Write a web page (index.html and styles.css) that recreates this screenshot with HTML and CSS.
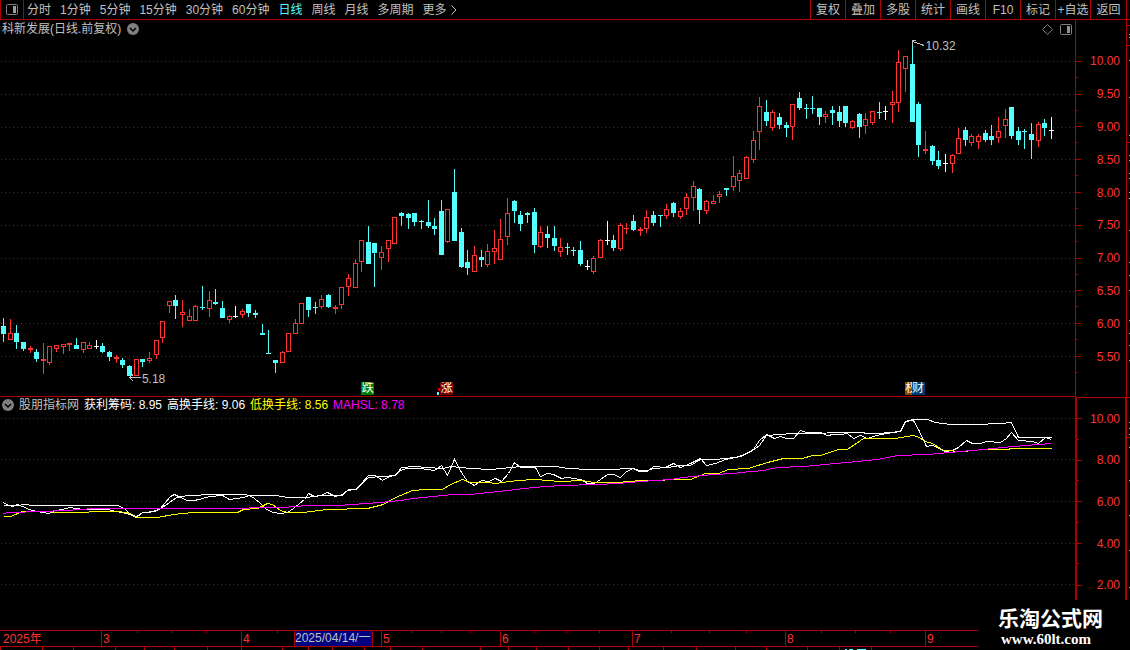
FILE: index.html
```html
<!DOCTYPE html>
<html lang="zh-CN">
<head>
  <meta charset="UTF-8" />
  <title>科新发展 日线</title>
  <link rel="stylesheet" href="styles.css">
</head>
<body>

<header class="toolbar">
  <button class="layout-btn" aria-label="布局">
    <svg width="12" height="12" viewBox="0 0 12 12">
      <rect x="0.5" y="0.5" width="11" height="10" rx="1" fill="none" stroke="#808080"/>
      <rect x="7" y="2" width="3" height="7" fill="#a0a0a0"/>
    </svg>
  </button>
  <nav class="periods">
    <button>分时</button>
    <button>1分钟</button>
    <button>5分钟</button>
    <button>15分钟</button>
    <button>30分钟</button>
    <button>60分钟</button>
    <button class="active">日线</button>
    <button>周线</button>
    <button>月线</button>
    <button>多周期</button>
    <button>更多<svg class="more" width="6" height="10" viewBox="0 0 6 10"><path d="M0.5 0.5 L5 5 L0.5 9.5" fill="none" stroke="#c0c0c0"/></svg></button>
  </nav>
  <nav class="tools">
    <button>复权</button>
    <button>叠加</button>
    <button>多股</button>
    <button>统计</button>
    <button>画线</button>
    <button>F10</button>
    <button>标记</button>
    <button>+自选</button>
    <button>返回</button>
  </nav>
</header>

<main class="board">
  <section class="chart price">
    <svg id="price" class="plot" viewBox="0 20 1075 376" preserveAspectRatio="none"></svg>
    <h1 class="title">科新发展(日线.前复权)
      <svg width="12" height="12" viewBox="0 0 12 12"><circle cx="6" cy="6" r="6" fill="#808080"/><path d="M3 5 L6 8 L9 5" fill="none" stroke="#000" stroke-width="1.5"/></svg>
    </h1>
    <div class="corner">
      <svg width="11" height="11" viewBox="0 0 11 11"><path d="M5.5 0.5 L10.5 5.5 L5.5 10.5 L0.5 5.5 Z" fill="none" stroke="#808080"/></svg>
      <svg width="12" height="11" viewBox="0 0 12 11"><rect x="0.5" y="0.5" width="11" height="10" rx="1" fill="none" stroke="#808080"/><rect x="7" y="2" width="3" height="7" fill="#909090"/></svg>
    </div>
    <span class="extreme high">10.32</span>
    <span class="extreme low">5.18</span>
    <span class="flag fall">跌</span>
    <span class="flag rise">涨</span>
    <span class="flag half">权</span>
    <span class="flag fin">财</span>
  </section>
  <ol class="scale price-scale">
    <li>10.00</li><li>9.50</li><li>9.00</li><li>8.50</li><li>8.00</li>
    <li>7.50</li><li>7.00</li><li>6.50</li><li>6.00</li><li>5.50</li>
  </ol>

  <section class="chart indicator">
    <svg id="indicator" class="plot" viewBox="0 397 1075 233" preserveAspectRatio="none"></svg>
    <div class="legend">
      <svg width="12" height="12" viewBox="0 0 12 12"><circle cx="6" cy="6" r="6" fill="#808080"/><path d="M3 5 L6 8 L9 5" fill="none" stroke="#000" stroke-width="1.5"/></svg>
      <span>股朋指标网</span>
      <span class="white">获利筹码: 8.95</span>
      <span class="white">高换手线: 9.06</span>
      <span class="yellow">低换手线: 8.56</span>
      <span class="magenta">MAHSL: 8.78</span>
    </div>
  </section>
  <ol class="scale ind-scale">
    <li>10.00</li><li>8.00</li><li>6.00</li><li>4.00</li><li>2.00</li>
  </ol>
  <svg id="edge" class="edge" width="3" height="610" viewBox="0 20 3 610"></svg>
</main>

<footer>
  <div class="dates">
    <ol class="months">
      <li>2025年</li><li>3</li><li>4</li><li>5</li><li>6</li><li>7</li><li>8</li><li>9</li>
    </ol>
    <span class="cursor-date">2025/04/14/一</span>
  </div>
  <div id="tabs" class="tabs"></div>
</footer>

<div class="watermark">
  <strong>乐淘公式网</strong>
  <span>www.60lt.com</span>
</div>

<script src="chart.js"></script>
</body>
</html>
```
FILE: styles.css
```css
* {
  box-sizing: border-box;
}
body {
  margin: 0;
  position: relative;
  background: #000;
  color: #c0c0c0;
  font: 12px/16px "Liberation Sans", "Noto Sans CJK SC", sans-serif;
  overflow: hidden;
}
button {
  margin: 0;
  padding: 0;
  border: 0;
  background: none;
  color: inherit;
  font: inherit;
  white-space: nowrap;
}
ol {
  margin: 0;
  padding: 0;
  list-style: none;
}

/* top bar */
.toolbar {
  display: flex;
  height: 20px;
  padding-right: 3px;
  border-bottom: 1px solid #b00000;
}
.layout-btn {
  width: 24px;
  border: 1px solid #b00000;
  border-width: 0 1px;
  display: flex;
  align-items: center;
  justify-content: center;
}
.periods {
  flex: 1;
  display: flex;
  gap: 9px;
  padding-left: 3px;
}
.periods .active {
  color: #54ffff;
}
.more {
  margin-left: 4px;
  vertical-align: -1px;
}
.tools {
  width: 317px;
  display: grid;
  grid-template-columns: repeat(8, 35px) 1fr;
  border-right: 1px solid #b00000;
}
.tools button {
  border-left: 1px solid #b00000;
}

/* charts */
.board {
  position: relative;
  display: grid;
  grid-template-columns: 1fr 52px;
  padding-right: 3px;
}
.chart {
  position: relative;
}
.price {
  height: 377px;
  border-bottom: 1px solid #b00000;
}
.indicator {
  height: 233px;
}
.plot {
  display: block;
  width: 100%;
  height: 100%;
  shape-rendering: crispEdges;
}
.title {
  position: absolute;
  top: 1px;
  left: 2px;
  margin: 0;
  font: inherit;
  display: flex;
  align-items: center;
  gap: 6px;
}
.corner {
  position: absolute;
  top: 4px;
  right: 3px;
  display: flex;
  gap: 7px;
}
.extreme {
  position: absolute;
}
.high {
  top: 18px;
  left: 86.1%;
}
.low {
  top: 351px;
  left: 13.2%;
}
.flag {
  position: absolute;
  bottom: 1px;
  width: 13px;
  height: 13px;
  line-height: 13px;
  text-align: center;
  color: #fff;
  overflow: hidden;
}
.fall {
  left: 33.6%;
  background: #008000;
}
.rise {
  left: 40.95%;
  background: #800000;
}
.half {
  left: 84.2%;
  width: 7px;
  text-align: left;
  background: #904800;
}
.fin {
  left: 84.8%;
  background: #003c70;
}
.legend {
  position: absolute;
  top: 0;
  left: 2px;
  display: flex;
  align-items: center;
  gap: 5px;
}
.white {
  color: #fff;
}
.yellow {
  color: #ff0;
}
.magenta {
  color: #f0f;
}

/* value scales */
.scale {
  display: grid;
  border: 0 solid #b00000;
  color: #ff3232;
}
.price-scale {
  border-width: 0 1px;
  padding: 25px 0 24px;
  grid-template-rows: repeat(10, 1fr);
}
.ind-scale {
  border-width: 1px 2px 0;
  padding-bottom: 24px;
  grid-template-rows: repeat(5, 1fr);
}
.scale li {
  display: flex;
  align-items: center;
  justify-content: space-between;
  padding-right: 6px;
  background: linear-gradient(#b00000, #b00000) left bottom / 2px 1px no-repeat;
}
.scale li::before {
  content: "";
  width: 5px;
  height: 1px;
  background: #b00000;
}
.ind-scale li {
  padding-right: 5px;
}
.edge {
  position: absolute;
  top: 0;
  right: 0;
}

/* date axis */
.dates {
  position: relative;
  border: 1px solid #b00000;
  border-width: 1px 0;
}
.months {
  display: grid;
  grid-template-columns: 101fr 140fr 140fr 119fr 132fr 153fr 140fr 205fr;
  color: #ff3232;
}
.months li {
  height: 15px;
  line-height: 16px;
  padding-left: 1px;
  border-left: 1px solid #b00000;
  background:
    linear-gradient(#b00000, #b00000) 25% 0 / 1px 2px no-repeat,
    linear-gradient(#b00000, #b00000) 50% 0 / 1px 2px no-repeat,
    linear-gradient(#b00000, #b00000) 75% 0 / 1px 2px no-repeat;
}
.months li:first-child {
  padding-left: 3px;
  border-left: 0;
}
.months li:first-child,
.months li:last-child {
  background: none;
}
.cursor-date {
  position: absolute;
  top: 0;
  left: 26.02%;
  width: 79px;
  height: 15px;
  line-height: 15px;
  border: 1px solid #b00000;
  border-width: 0 1px;
  background: #000080;
  overflow: hidden;
  white-space: nowrap;
}
.tabs {
  display: flex;
  height: 3px;
}
.tabs i {
  flex: none;
  border-left: 1px solid #b00000;
}
.tabs .lit {
  background: linear-gradient(90deg, transparent 5px, #54ffff 5px, #54ffff 7px, transparent 7px, transparent 9px, #54ffff 9px, #54ffff 13px, transparent 13px, transparent 17px, #54ffff 17px, #54ffff 26px, transparent 26px) 0 2px no-repeat;
}

.watermark {
  position: absolute;
  right: 0;
  bottom: 0;
  width: 152px;
  height: 50px;
  padding: 8px 0 0 20px;
  background: #000;
  color: #fff;
}
.watermark strong {
  display: block;
  font-size: 21px;
  line-height: 22px;
}
.watermark span {
  display: block;
  padding-left: 3px;
  font: bold 15px/18px "Liberation Serif", serif;
}
```
FILE: chart.js
```javascript
const NS = 'http://www.w3.org/2000/svg';
const RED = '#ff3232';
const CYAN = '#54ffff';

// one candle per entry: kind high bodyTop bodyBottom low
// r = up (hollow), c = down (filled), w = unchanged
const candles = `
c 318 326 334 342,r 319 333 340 340,c 325 333 342 349,c 342 342 349 351,r 346 348 350 353,c 349 352 359 362,
r 343 359 361 374,r 346 346 363 365,r 345 345 349 352,r 344 344 347 354,r 343 343 345 351,c 338 345 349 349,
r 342 342 350 353,r 342 345 349 349,w 340 346 347 349,c 343 346 352 353,c 351 352 357 361,r 355 357 359 363,
c 358 360 365 368,c 365 366 376 376,r 359 359 376 376,c 359 359 362 367,r 352 358 361 363,r 340 340 355 359,
r 321 321 338 343,r 301 301 306 313,c 295 300 306 319,r 300 312 315 327,r 309 316 321 321,r 305 306 321 321,
c 286 307 308 310,r 291 300 309 317,c 289 302 304 305,c 301 308 318 318,r 315 316 320 323,w 306 316 317 318,
r 309 311 315 318,c 304 304 313 317,c 310 313 315 318,c 324 333 335 335,c 330 353 354 354,c 360 360 363 373,
r 351 352 363 363,r 333 333 352 352,r 319 323 334 334,r 303 303 324 324,c 297 297 310 317,c 302 307 308 314,
r 295 299 307 309,c 294 295 307 308,r 305 307 309 314,r 287 287 305 309,r 274 278 287 296,r 259 263 288 288,
r 240 240 262 272,c 226 242 264 264,c 243 243 253 287,r 246 252 258 270,r 240 240 249 262,r 217 217 244 244,
c 212 213 216 226,c 213 214 218 229,c 213 213 222 226,c 220 221 222 229,c 200 222 226 228,c 218 226 229 235,
c 200 211 255 255,r 209 209 242 243,c 169 192 241 241,c 228 232 267 268,c 250 262 268 275,r 246 255 272 272,
c 250 257 260 267,r 244 251 265 267,r 230 248 252 264,r 219 239 260 260,r 198 213 237 245,c 200 201 211 223,
c 211 215 224 231,c 212 213 215 223,c 208 212 245 253,r 226 232 247 248,c 226 234 238 248,c 226 238 246 251,
r 238 247 252 257,c 243 247 248 255,c 247 250 251 256,c 241 250 264 266,w 260 266 267 270,r 256 258 272 274,
r 239 240 258 258,w 221 240 241 245,c 235 240 248 251,r 223 225 249 251,r 223 228 229 234,c 215 221 230 231,
r 227 229 231 236,r 210 217 229 233,c 211 215 223 226,c 215 215 216 227,r 204 209 216 219,c 202 203 213 217,
r 208 211 217 219,r 193 197 209 215,r 181 186 198 211,c 188 189 210 224,r 200 201 211 214,r 195 201 204 204,
r 191 194 197 203,c 188 188 190 196,r 156 176 187 191,r 170 173 181 192,r 156 157 179 179,r 131 140 160 163,
r 97 106 132 150,c 100 112 121 126,r 110 112 128 131,c 113 117 125 129,c 122 125 128 137,r 104 104 127 140,
c 92 98 108 110,c 104 108 109 119,c 96 108 109 114,c 108 108 117 125,r 111 114 117 123,c 106 110 113 125,
c 106 112 121 127,c 106 106 123 127,r 120 121 128 129,c 113 114 127 138,r 113 119 126 134,r 111 111 123 125,
c 102 112 113 119,w 106 111 112 120,r 91 102 105 123,r 50 62 103 112,r 56 56 69 92,c 40 64 122 122,
c 102 104 145 157,r 131 149 151 154,c 145 146 161 165,c 151 160 166 169,w 154 163 164 172,r 154 155 164 173,
r 128 138 154 154,c 127 130 140 146,r 134 136 143 146,r 134 136 142 149,c 130 133 140 142,c 125 136 140 145,
r 117 131 138 143,r 109 119 126 138,c 107 107 136 139,c 127 131 140 145,c 129 131 132 149,c 123 134 140 159,
r 122 124 141 147,c 119 123 128 136,w 117 130 131 139`;

const lines = [
  ['#ffffff', '3,505 17,505 24,504 33,505 117,505 124,508 129,513 136,516 142,512 155,511 162,507 169,502 176,497 187,495 215,494 276,495 287,497 306,497 322,495 342,495 348,489 356,489 368,477 395,475 401,467 415,466 425,467 443,468 450,466 470,468 490,469 501,468 520,466 555,466 567,468 590,469 614,469 625,468 633,468 639,470 647,470 653,468 667,467 680,465 690,465 700,459 715,459 735,457 745,454 752,450 759,445 766,435 780,434 792,433 862,432 866,433 878,433 900,431 905,421 913,419 927,419 935,422 950,424 975,424 1000,423 1011,422 1018,437 1051,437'],
  ['#ffffff', '3,502 6,504 12,506 17,504 22,506 29,509 36,511 43,512 48,513 55,510 62,509 69,507 76,508 82,509 108,509 115,511 122,512 129,514 136,517 142,512 149,512 155,510 160,508 165,502 170,496 174,494 180,497 187,500 193,500 199,499 205,497 210,496 222,495 229,499 236,498 243,497 249,495 254,498 260,503 266,509 273,512 280,513 287,512 293,508 299,503 304,499 308,493 314,496 320,495 327,492 335,496 342,494 347,490 355,489 361,483 368,475 375,475 382,480 389,476 394,475 400,470 406,468 420,468 434,470 441,465 447,475 454,459 461,472 467,481 474,485 481,480 488,481 495,478 501,481 508,473 514,462 520,467 535,467 540,476 547,473 553,474 561,478 567,477 580,479 587,483 594,483 600,479 607,474 613,474 620,477 626,471 633,468 639,471 647,471 653,466 665,467 673,463 680,467 690,463 700,458 706,465 715,463 725,459 740,456 753,449 759,440 766,434 774,438 780,436 786,438 793,438 800,430 806,432 820,432 827,435 833,434 840,434 847,433 853,438 860,435 867,438 873,436 880,434 887,433 893,432 900,431 905,421 913,420 919,431 926,446 932,445 939,448 945,451 952,450 958,447 966,440 972,443 980,443 986,441 1000,442 1006,438 1011,432 1018,440 1032,441 1038,443 1045,437 1051,439'],
  ['#ffff00', '3,516 10,516 22,511 42,511 60,512 118,511 130,513 136,517 157,517 173,514 193,512 237,512 243,509 257,508 267,503 272,504 280,510 287,512 303,512 327,509 367,508 383,504 393,498 400,495 412,490 425,489 442,489 450,484 462,479 470,482 488,482 495,483 517,480 535,479 560,481 582,480 593,482 617,482 640,480 690,479 705,473 718,473 728,469 748,468 767,462 783,458 802,458 812,455 820,455 838,449 847,449 863,438 895,438 912,435 917,436 925,441 932,443 943,450 962,451 983,449 1008,449 1010,448 1051,448'],
  ['#ff00ff', '3,513 8,512 43,511 83,509 90,508 240,508 257,507 283,507 307,505 337,505 380,502 400,500 413,498 433,496 453,494 470,494 507,490 533,487 560,485 597,484 617,483 640,481 670,479 683,477 713,474 733,473 740,472 763,470 777,467 803,466 857,461 877,459 897,455 927,454 960,451 983,449 1013,446 1051,443']
];

function add(svg, name, attrs) {
  const el = document.createElementNS(NS, name);
  for (const key in attrs) el.setAttribute(key, attrs[key]);
  svg.appendChild(el);
}

function rect(svg, x, y, width, height, fill) {
  if (height > 0) add(svg, 'rect', { x, y, width, height, fill });
}

function drawGrid(svg, rows) {
  rows.forEach(y => add(svg, 'path', {
    d: `M1 ${y + 0.5} H1075`, stroke: '#b00000', 'stroke-dasharray': '1 3'
  }));
}

const price = document.getElementById('price');
drawGrid(price, [61, 94, 127, 159, 192, 225, 258, 291, 323, 356]);

candles.trim().split(',').forEach((row, i) => {
  const [kind, ...values] = row.trim().split(' ');
  const [high, top, bottom, low] = values.map(Number);
  const x = Math.round(3 + i * 1048 / 158);
  const color = { r: RED, c: CYAN, w: '#ffffff' }[kind];
  rect(price, x, high, 1, top - high, color);
  rect(price, x, bottom, 1, low - bottom, color);
  rect(price, x - 2, top, 5, bottom - top, color);
  if (kind === 'r') {
    rect(price, x - 1, top + 1, 3, bottom - top - 2, '#000');
  }
});

// pointers to the highest and lowest price
add(price, 'path', {
  d: 'M912.5 41.5 L924 45.5 M912.5 45.5 V40.5 H916 M129 377.5 H141 M133 381 L129.5 377.5 L133 374.5',
  fill: 'none', stroke: '#c0c0c0'
});
// small marker left of the rise flag
rect(price, 438, 388, 2, 3, '#e00000');
rect(price, 437, 392, 2, 3, CYAN);

const indicator = document.getElementById('indicator');
drawGrid(indicator, [418, 459, 501, 543, 584]);
lines.forEach(([stroke, points]) => add(indicator, 'polyline', {
  points, stroke, fill: 'none', transform: 'translate(0.5 0.5)'
}));

// sliver of the neighbouring panel
const edge = document.getElementById('edge');
[25, 45, 142, 397, 437].forEach(y => rect(edge, 0, y, 3, 1, '#b00000'));
[34, 37, 60, 97, 135, 155, 160, 173, 178, 192, 198, 230, 262, 275, 290, 320, 333, 345, 360,
  422, 428, 434, 447, 480, 515, 550, 587].forEach(y => rect(edge, 2, y, 1, 1, '#c0c0c0'));

const tabs = document.getElementById('tabs');
const stops = [0, 42, 73, 115, 144, 174, 207, 241, 282, 308, 332, 364, 390, 422, 480, 508, 536,
  568, 599, 628, 663, 696, 735, 766, 807, 839, 871, 978];
stops.slice(1).forEach((end, i) => {
  const tab = document.createElement('i');
  tab.style.width = (end - stops[i]) + 'px';
  if (stops[i] === 839) tab.className = 'lit';
  tabs.appendChild(tab);
});
```
